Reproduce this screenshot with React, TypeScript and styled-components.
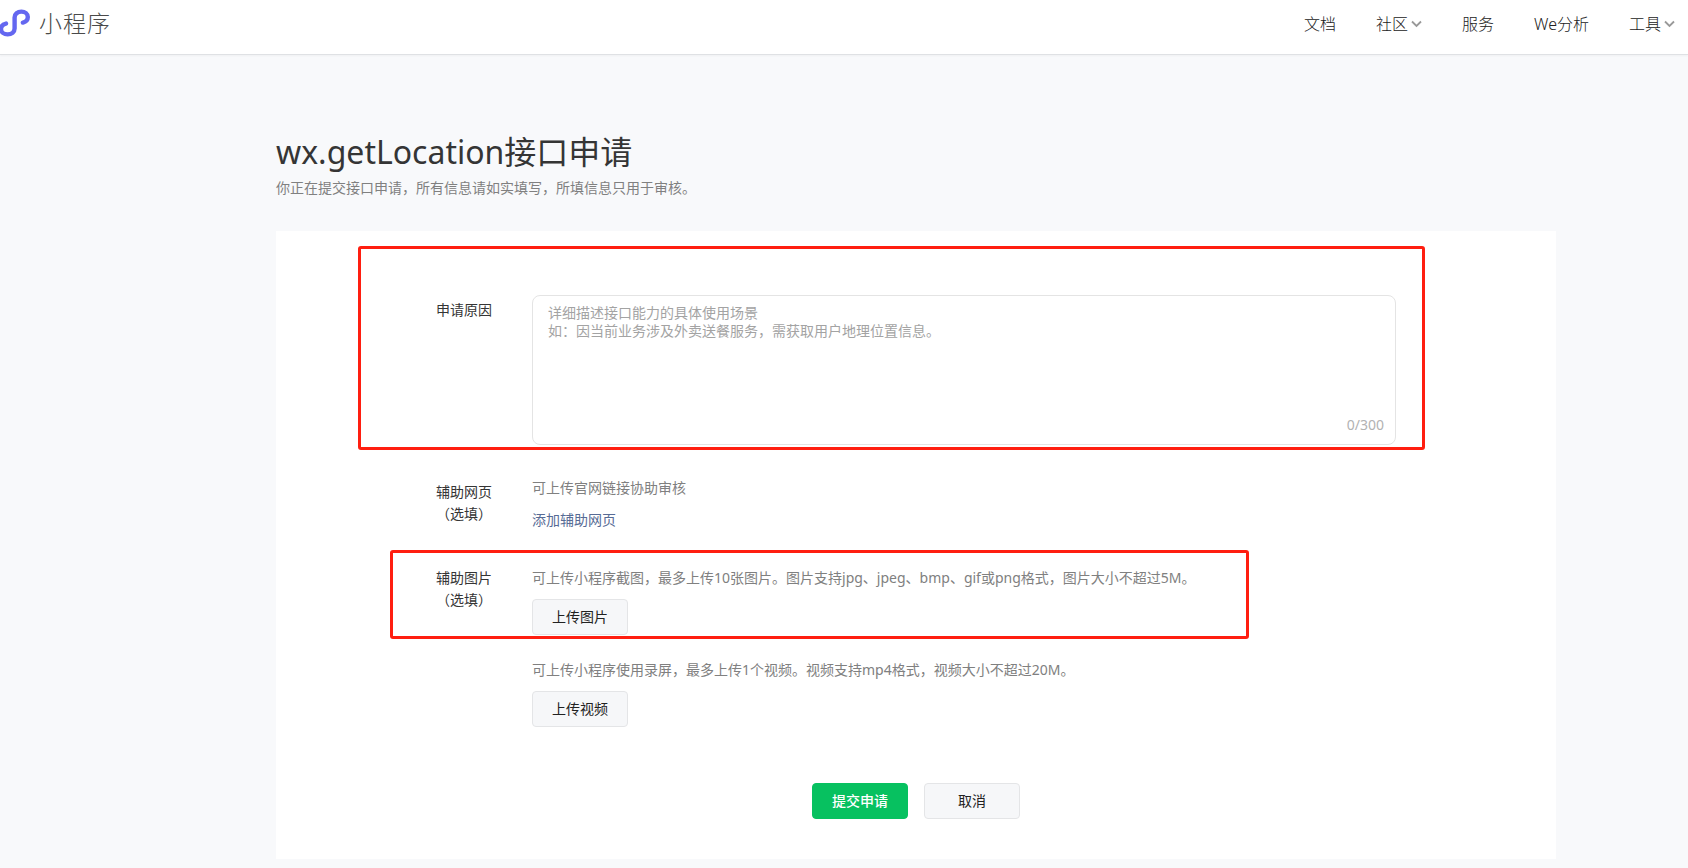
import React, { useState } from "react";
import styled, { createGlobalStyle } from "styled-components";

const GlobalStyle = createGlobalStyle`
  *, *::before, *::after { box-sizing: border-box; }
  body {
    margin: 0;
    background: #f8f9fb;
    color: #353535;
    font-family: "Noto Sans", "Noto Sans CJK SC", sans-serif;
    font-weight: 400;
    font-size: 14px;
    line-height: 22px;
  }
  button, textarea { font: inherit; }
`;

const Header = styled.header`
  display: flex;
  align-items: center;
  justify-content: space-between;
  height: 55px;
  padding: 0 13px 6px 0;
  background: #fff;
  border-bottom: 1px solid #dfe1e4;
  box-shadow: 0 1px 2px rgba(0, 0, 0, 0.04);
`;

const Brand = styled.a`
  display: flex;
  align-items: center;
  gap: 8px;
  padding-bottom: 2px;
  color: #4a4a4a;
  font-size: 23px;
  font-weight: 300;
  line-height: 32px;
  letter-spacing: 1px;
  text-decoration: none;
`;

const Nav = styled.nav`
  display: flex;
  align-items: center;
  gap: 40px;
`;

const NavLink = styled.a`
  display: flex;
  align-items: center;
  gap: 3px;
  color: #222;
  font-size: 16px;
  font-weight: 300;
  line-height: 24px;
  text-decoration: none;
  white-space: nowrap;
`;

const Main = styled.main`
  padding: 75px 132px 8px 276px;
`;

const Title = styled.h1`
  margin: 0;
  font-size: 32px;
  font-weight: 400;
  line-height: 44px;
`;

const Subtitle = styled.p`
  margin: 3px 0 32px;
  color: #808080;
`;

const Card = styled.form`
  padding: 64px 160px 40px;
  background: #fff;
`;

const Row = styled.div<{ $gap?: number }>`
  position: relative;
  display: flex;
  gap: 40px;
  margin-top: ${(p) => p.$gap ?? 0}px;
`;

const Label = styled.label<{ $drop?: boolean }>`
  flex: none;
  width: 56px;
  padding-top: ${(p) => (p.$drop ? 4 : 0)}px;
  text-align: center;
`;

const Field = styled.div`
  position: relative;
  display: flex;
  flex: 1;
  flex-direction: column;
  align-items: flex-start;
  gap: 10px;
  min-width: 0;
`;

const TextArea = styled.textarea`
  display: block;
  width: 100%;
  height: 150px;
  padding: 8px 15px;
  border: 1px solid #e4e4e4;
  border-radius: 8px;
  background: #fff;
  color: #353535;
  line-height: 18px;
  resize: none;
  outline: none;
  &::placeholder { color: #a3a3a3; opacity: 1; }
`;

const Counter = styled.span`
  position: absolute;
  right: 12px;
  bottom: 9px;
  color: #b2b2b2;
`;

const Hint = styled.p`
  margin: 0;
  color: #808080;
`;

const AddLink = styled.a`
  color: #576b95;
  text-decoration: none;
`;

const Button = styled.button<{ $primary?: boolean }>`
  width: 96px;
  height: 36px;
  padding: 0;
  border: 1px solid ${(p) => (p.$primary ? "#07c160" : "#e4e5e7")};
  border-radius: 4px;
  background: ${(p) => (p.$primary ? "#07c160" : "#f6f7f9")};
  color: ${(p) => (p.$primary ? "#fff" : "#222")};
  font-weight: ${(p) => (p.$primary ? 500 : 400)};
  cursor: pointer;
`;

const Actions = styled.div`
  display: flex;
  justify-content: center;
  gap: 16px;
  margin-top: 56px;
`;

const Highlight = styled.div<{ $inset: string }>`
  position: absolute;
  inset: ${(p) => p.$inset};
  border: 3px solid #ff1e10;
  border-radius: 3px;
  pointer-events: none;
`;

const Logo = () => (
  <svg width="31" height="30" viewBox="0 0 31 30" fill="none" stroke="#6467f0" strokeWidth="4.4" strokeLinecap="round" aria-hidden="true">
    <path d="M6 15.6C2.6 16.400 1 18.600 1 21C1 24.200 4 26.400 7.600 26.400C11.600 26.400 14.600 24 14.600 20.600V9.400C14.600 6 17.600 3.600 21.400 3.600C25 3.600 27.800 6 27.800 9C27.800 11.600 26 13.800 22.900 14.600" />
  </svg>
);

const Chevron = () => (
  <svg width="11" height="8" viewBox="0 0 11 8" fill="none" stroke="#999" strokeWidth="1.800" aria-hidden="true">
    <path d="M1 1.500 5.500 6 10 1.500" />
  </svg>
);

const navItems = [
  { text: "文档" },
  { text: "社区", menu: true },
  { text: "服务" },
  { text: "We分析" },
  { text: "工具", menu: true },
];

export default function App() {
  const [reason, setReason] = useState("");
  return (
    <>
      <GlobalStyle />
      <Header>
        <Brand href="#home">
          <Logo />
          小程序
        </Brand>
        <Nav>
          {navItems.map((item) => (
            <NavLink key={item.text} href="#nav">
              {item.text}
              {item.menu && <Chevron />}
            </NavLink>
          ))}
        </Nav>
      </Header>
      <Main>
        <Title>wx.getLocation接口申请</Title>
        <Subtitle>你正在提交接口申请，所有信息请如实填写，所填信息只用于审核。</Subtitle>
        <Card onSubmit={(e) => e.preventDefault()}>
          <Row>
            <Label htmlFor="reason" $drop>申请原因</Label>
            <Field>
              <TextArea
                id="reason"
                maxLength={300}
                value={reason}
                onChange={(e) => setReason(e.target.value)}
                placeholder={"详细描述接口能力的具体使用场景\n如：因当前业务涉及外卖送餐服务，需获取用户地理位置信息。"}
              />
              <Counter>{reason.length}/300</Counter>
            </Field>
            <Highlight $inset="-49px -29px -5px -78px" />
          </Row>
          <Row $gap={32}>
            <Label as="span" $drop>辅助网页（选填）</Label>
            <Field>
              <Hint>可上传官网链接协助审核</Hint>
              <AddLink href="#add-page">添加辅助网页</AddLink>
            </Field>
          </Row>
          <Row $gap={36}>
            <Label htmlFor="upload-image">辅助图片（选填）</Label>
            <Field>
              <Hint>可上传小程序截图，最多上传10张图片。图片支持jpg、jpeg、bmp、gif或png格式，图片大小不超过5M。</Hint>
              <Button id="upload-image" type="button">上传图片</Button>
            </Field>
            <Highlight $inset="-17px 147px -4px -46px" />
          </Row>
          <Row $gap={24}>
            <Label as="span" />
            <Field>
              <Hint>可上传小程序使用录屏，最多上传1个视频。视频支持mp4格式，视频大小不超过20M。</Hint>
              <Button type="button">上传视频</Button>
            </Field>
          </Row>
          <Actions>
            <Button type="submit" $primary>提交申请</Button>
            <Button type="button">取消</Button>
          </Actions>
        </Card>
      </Main>
    </>
  );
}
